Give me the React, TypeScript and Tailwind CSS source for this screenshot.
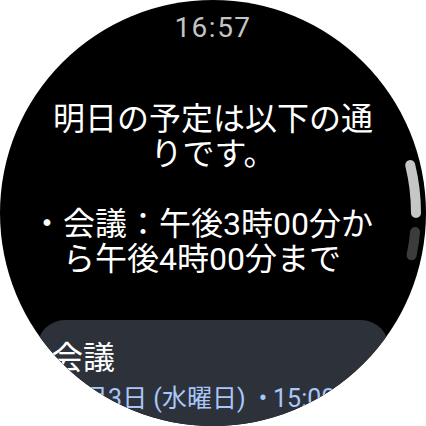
import React from "react";

export default function App() {
  return (
    <div className="w-[426px] h-[426px] bg-white">
      <div className="relative w-[426px] h-[426px] rounded-full bg-black overflow-hidden flex flex-col items-center font-['Roboto','Noto_Sans_CJK_JP',sans-serif]">
        <div className="pt-[14px] text-[28px] leading-[28px] text-[#c4c4c4] tracking-[1.5px]">16:57</div>
        <div className="mt-[60px] flex flex-col items-center text-white text-[32px] leading-[35px]">
          <p className="w-[346px] text-center">明日の予定は以下の通りです。</p>
          <div className="h-[35px]" />
          <p className="w-[366px] mr-[22px] text-center">・会議：午後3時00分から午後4時00分まで</p>
        </div>
        <div className="mt-[43px] w-[352px] shrink-0 rounded-[28px] bg-[#2d313a] px-[14px] pt-[20px] pb-[16px]">
          <div className="text-[32px] leading-[36px] text-white">会議</div>
          <div className="mt-[9px] ml-[4px] text-[25px] leading-[28px] text-[#a8c7fa] whitespace-nowrap">
            12月3日 (水曜日)<span className="ml-[13px] mr-[6px] font-['Roboto',sans-serif]">•</span>15:00～16:00
          </div>
        </div>
        <svg className="absolute inset-0 pointer-events-none" width="426" height="426" viewBox="0 0 426 426">
          <path d="M 410.2 165 A 203 203 0 0 1 416 213" stroke="#c6c6c6" strokeWidth="10" strokeLinecap="round" fill="none" />
          <path d="M 415.1 232 A 203 203 0 0 1 411.6 255.2" stroke="#3c3c3c" strokeWidth="10" strokeLinecap="round" fill="none" />
        </svg>
      </div>
    </div>
  );
}
